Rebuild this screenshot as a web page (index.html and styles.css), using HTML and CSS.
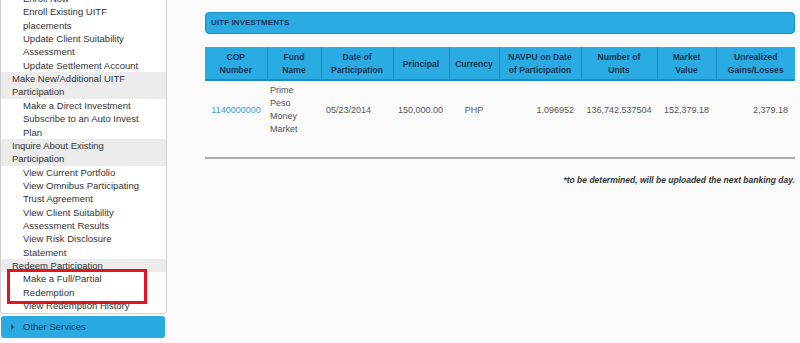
FILE: index.html
```html
<!DOCTYPE html>
<html lang="en">
<head>
    <meta charset="UTF-8">
    <meta name="viewport" content="width=device-width, initial-scale=1.0">
    <title>UITF Investments</title>
    <link rel="stylesheet" href="styles.css">
</head>
<body>
    <div class="page">
        <aside class="sidebar">
            <ul class="menu">
                <li class="sub">Enroll Now</li>
                <li class="sub">Enroll Existing UITF placements</li>
                <li class="sub">Update Client Suitability Assessment</li>
                <li class="sub">Update Settlement Account</li>
                <li class="group">Make New/Additional UITF Participation</li>
                <li class="sub">Make a Direct Investment</li>
                <li class="sub">Subscribe to an Auto Invest Plan</li>
                <li class="group">Inquire About Existing Participation</li>
                <li class="sub">View Current Portfolio</li>
                <li class="sub">View Omnibus Participating Trust Agreement</li>
                <li class="sub">View Client Suitability Assessment Results</li>
                <li class="sub">View Risk Disclosure Statement</li>
                <li class="group">Redeem Participation</li>
                <li class="sub highlight">Make a Full/Partial Redemption</li>
                <li class="sub">View Redemption History</li>
            </ul>
            <div class="other"><span class="arrow"></span>Other Services</div>
        </aside>

        <main class="content">
            <div class="panel-title">UITF INVESTMENTS</div>

            <table class="holdings">
                <colgroup>
                    <col style="width:62px">
                    <col style="width:54px">
                    <col style="width:72px">
                    <col style="width:56px">
                    <col style="width:50px">
                    <col style="width:82px">
                    <col style="width:76px">
                    <col style="width:59px">
                    <col style="width:79px">
                </colgroup>
                <thead>
                    <tr>
                        <th>COP Number</th>
                        <th>Fund Name</th>
                        <th>Date of Participation</th>
                        <th>Principal</th>
                        <th class="narrow">Currency</th>
                        <th>NAVPU on Date of Participation</th>
                        <th>Number of Units</th>
                        <th>Market Value</th>
                        <th>Unrealized Gains/Losses</th>
                    </tr>
                </thead>
                <tbody>
                    <tr>
                        <td class="cop"><a href="#">1140000000</a></td>
                        <td class="fund">Prime Peso Money Market</td>
                        <td>05/23/2014</td>
                        <td>150,000.00</td>
                        <td class="center">PHP</td>
                        <td class="right">1.096952</td>
                        <td class="center">136,742.537504</td>
                        <td class="center">152,379.18</td>
                        <td class="right">2,379.18</td>
                    </tr>
                </tbody>
            </table>

            <div class="rule"></div>

            <p class="note">*to be determined, will be uploaded the next banking day.</p>
        </main>
    </div>
</body>
</html>
```

FILE: styles.css
```css
* {
    margin: 0;
    padding: 0;
    box-sizing: border-box;
}

body {
    background: #fafafa;
    font-family: "Liberation Sans", Arial, sans-serif;
    overflow: hidden;
    height: 343px;
}

.page {
    display: flex;
    align-items: flex-start;
}

/* left navigation */
.sidebar {
    width: 167px;
    flex-shrink: 0;
    display: flex;
    flex-direction: column;
}

.menu {
    list-style: none;
    width: 167px;
    margin-top: -8.1px;
    background: #fff;
    border: 1px solid #cfcfcf;
    border-top: none;
    border-radius: 0 0 4px 4px;
    font-size: 9.5px;
    line-height: 13.36px;
    color: #333;
}

.menu .sub {
    padding: 0 16px 0 22px;
    position: relative;
}

.menu .group {
    padding: 0 16px 0 11px;
    background: #ececec;
}

.highlight::after {
    content: "";
    position: absolute;
    left: 6px;
    right: 19px;
    top: -3.5px;
    bottom: -5px;
    border: 3px solid #e3141c;
}

.other {
    margin: 2px 0 0 1px;
    width: 164px;
    height: 22px;
    background: #29abe2;
    border-radius: 3px;
    color: #1b3d63;
    font-size: 9.5px;
    display: flex;
    align-items: center;
    padding-left: 10px;
}

.arrow {
    width: 0;
    height: 0;
    border-left: 3px solid #1b3d63;
    border-top: 3px solid transparent;
    border-bottom: 3px solid transparent;
    margin-right: 9px;
}

/* main area */
.content {
    flex: 1;
    padding: 12px 5px 0 38px;
}

.panel-title {
    height: 22px;
    background: #2aabe2;
    border: 1px solid #1e8fc6;
    border-radius: 4px;
    color: #1d3a5a;
    font-size: 8px;
    font-weight: bold;
    line-height: 20px;
    padding-left: 5px;
    letter-spacing: 0.1px;
}

.holdings {
    margin-top: 13px;
    width: 590px;
    border-collapse: collapse;
    table-layout: fixed;
}

.holdings th {
    background: #2aabe2;
    color: #1d3553;
    font-size: 8.6px;
    font-weight: bold;
    line-height: 13px;
    padding: 4px 6px 2px;
    border-left: 1px solid #1a8bc4;
    border-bottom: 2px solid #1a8bc4;
    text-align: center;
}

.holdings th.narrow {
    padding: 4px 2px 2px;
}

.holdings th:first-child {
    border-left: none;
}

.holdings td {
    font-size: 9px;
    color: #555;
    line-height: 13px;
    padding: 3px 5px;
    vertical-align: middle;
    text-align: left;
    white-space: nowrap;
}

.holdings td.fund {
    white-space: normal;
    padding: 3px 10px 3px 3px;
}

.holdings td.center {
    text-align: center;
    padding: 3px 2px;
}

.holdings td.right {
    text-align: right;
    padding-right: 7px;
}

.holdings td.cop {
    text-align: center;
    padding: 3px 2px;
}

.cop a {
    color: #3a9fd5;
    text-decoration: none;
}

.rule {
    margin-top: 18px;
    height: 2px;
    background: #ababab;
}

.note {
    margin-top: 15px;
    text-align: right;
    font-size: 8.5px;
    font-weight: bold;
    font-style: italic;
    line-height: 12px;
    color: #333;
}
```
